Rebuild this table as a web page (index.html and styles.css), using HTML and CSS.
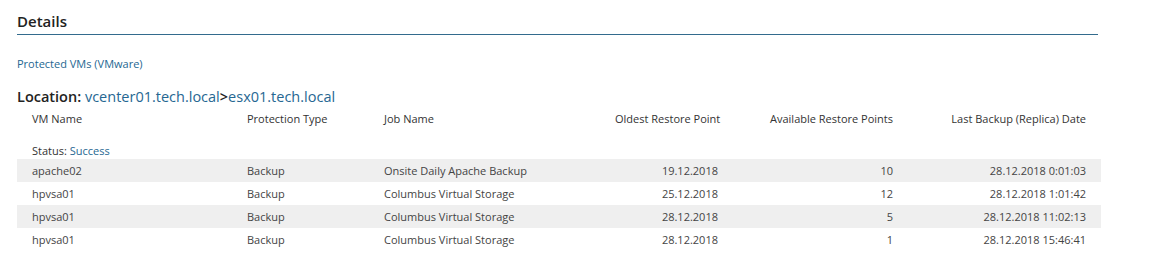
FILE: index.html
```html
<!DOCTYPE html>
<html>
<head>
<meta charset="utf-8">
<link rel="stylesheet" href="styles.css">
</head>
<body>
<div class="page">
  <h2 class="title">Details</h2>
  <div class="sub">Protected VMs (VMware)</div>
  <div class="location">Location: <span class="link">vcenter01.tech.local</span>&gt;<span class="link">esx01.tech.local</span></div>
  <table class="grid">
    <colgroup>
      <col class="c1"><col class="c2"><col class="c3"><col class="c4"><col class="c5"><col class="c6">
    </colgroup>
    <thead>
      <tr class="head">
        <th>VM Name</th><th>Protection Type</th><th>Job Name</th>
        <th class="r">Oldest Restore Point</th><th class="r">Available Restore Points</th><th class="r">Last Backup (Replica) Date</th>
      </tr>
    </thead>
    <tbody>
      <tr class="status"><td colspan="6">Status: <span class="link">Success</span></td></tr>
      <tr class="alt"><td>apache02</td><td>Backup</td><td>Onsite Daily Apache Backup</td><td class="r">19.12.2018</td><td class="r">10</td><td class="r">28.12.2018 0:01:03</td></tr>
      <tr><td>hpvsa01</td><td>Backup</td><td>Columbus Virtual Storage</td><td class="r">25.12.2018</td><td class="r">12</td><td class="r">28.12.2018 1:01:42</td></tr>
      <tr class="alt"><td>hpvsa01</td><td>Backup</td><td>Columbus Virtual Storage</td><td class="r">28.12.2018</td><td class="r">5</td><td class="r">28.12.2018 11:02:13</td></tr>
      <tr><td>hpvsa01</td><td>Backup</td><td>Columbus Virtual Storage</td><td class="r">28.12.2018</td><td class="r">1</td><td class="r">28.12.2018 15:46:41</td></tr>
    </tbody>
  </table>
</div>
</body>
</html>
```
FILE: styles.css
```css
html, body {
  margin: 0;
  padding: 0;
  background: #fff;
}
body {
  font-family: "Open Sans", "Noto Sans", sans-serif;
  color: #333;
}
.page {
  padding: 0 17px;
}
.title {
  width: 1081px;
  margin: 0;
  padding-top: 11px;
  height: 23px;
  font-size: 15px;
  font-weight: 600;
  line-height: 20px;
  color: #222;
  border-bottom: 1px solid #336b8d;
}
.sub {
  margin-top: 21px;
  font-size: 11px;
  line-height: 16px;
  color: #266792;
}
.location {
  margin-top: 15px;
  font-size: 14.5px;
  font-weight: 600;
  line-height: 20px;
  color: #222;
}
.location .link {
  font-weight: 400;
}
.link {
  color: #266792;
}
.grid {
  width: 1084px;
  border-collapse: collapse;
  table-layout: fixed;
  font-size: 11px;
  color: #444;
}
.c1 { width: 215px; }
.c2 { width: 137px; }
.c3 { width: 231px; }
.c4 { width: 133px; }
.c5 { width: 175px; }
.c6 { width: 193px; }
.grid th, .grid td {
  padding: 0 15px;
  text-align: left;
  font-weight: 400;
  white-space: nowrap;
  height: 23px;
}
.grid .r {
  text-align: right;
}
.head th {
  color: #333;
  height: 22px;
}
.status td {
  height: 20px;
  padding-top: 9px;
  padding-bottom: 1px;
  vertical-align: bottom;
  line-height: 15px;
  color: #333;
}
.alt {
  background: #efefef;
}
```
